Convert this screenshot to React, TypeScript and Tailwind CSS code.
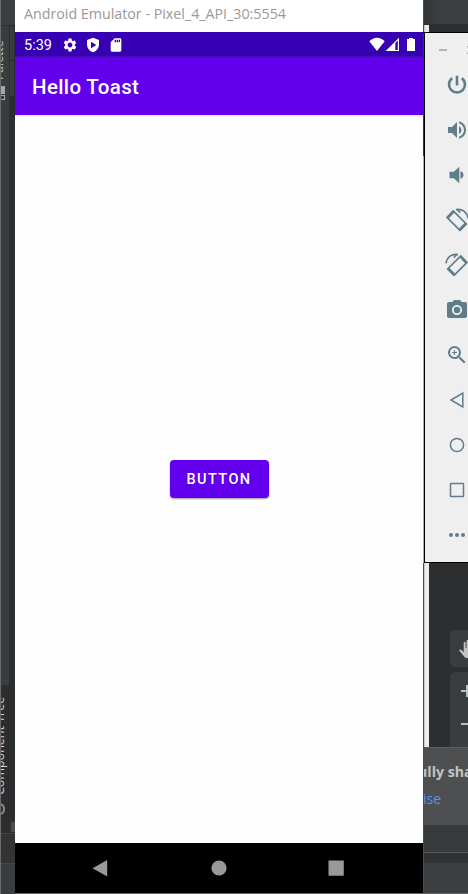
import React from "react";
import { MdSettings, MdSdCard, MdVolumeUp, MdCameraAlt, MdZoomIn } from "react-icons/md";

function Svg({ children, className = "h-6 w-6" }: { children: React.ReactNode; className?: string }) {
  return (
    <svg viewBox="0 0 24 24" className={`block shrink-0 ${className}`} fill="currentColor">
      {children}
    </svg>
  );
}

function Rotate({ flip = false }: { flip?: boolean }) {
  return (
    <Svg>
      <g transform={flip ? "translate(24 0) scale(-1 1)" : undefined} fill="none" stroke="currentColor">
        <path d="M8.2 2.9 2 9.4 15 22.4 21.4 16Z" strokeWidth="1.7" strokeLinejoin="round" />
        <path d="m8.8 3.5-6.2 6.5M14.4 21.8l6.4-6.4" strokeWidth="2.4" />
        <path d="M11 1.6c6.3-1.2 11 2.6 12 8.8M12.6 2l2.7 2.7" strokeWidth="1.6" />
      </g>
    </Svg>
  );
}

const tools: React.ReactNode[] = [
  <Svg><path d="M12 2.8v9.6M7.2 5.1a8 8 0 1 0 9.6 0" fill="none" stroke="currentColor" strokeWidth="2.6" /></Svg>,
  <MdVolumeUp size={24} />,
  <Svg><path d="M4.5 8.7v6.6h4.4l5.4 5V3.7l-5.4 5ZM15.5 8v8c1.9-.8 3-2.2 3-4s-1.1-3.2-3-4Z" /></Svg>,
  <Rotate />,
  <Rotate flip />,
  <MdCameraAlt size={24} />,
  <MdZoomIn size={24} />,
  <Svg><path d="M17.8 5v14L6 12Z" fill="none" stroke="currentColor" strokeWidth="1.5" /></Svg>,
  <Svg><circle cx="12" cy="12" r="6.6" fill="none" stroke="currentColor" strokeWidth="1.5" /></Svg>,
  <Svg><rect x="5.5" y="5.5" width="13" height="13" rx=".6" fill="none" stroke="currentColor" strokeWidth="1.5" /></Svg>,
  <Svg><circle cx="6" cy="12" r="2" /><circle cx="12" cy="12" r="2" /><circle cx="18" cy="12" r="2" /></Svg>,
];

function PaletteStrip() {
  return (
    <div className="relative flex w-[15px] shrink-0 flex-col overflow-hidden border-l border-[#6b6b6b] bg-[#2c2d2f]">
      <div className="h-[25px] shrink-0 bg-[#3c3f41]" />
      <div className="flex h-[660px] shrink-0 border-t border-[#292b2c]">
        <div className="w-2 bg-[#3a3d3f]" />
        <div className="ml-px h-[71px] w-1 border-b border-[#292b2c] bg-[#3a3d3f]">
          <div className="h-[35px] border-b border-[#292b2c]" />
        </div>
      </div>
      <div className="h-[148px] shrink-0" />
      <div className="h-[30px] shrink-0 border-t border-[#444648] bg-[#323335]" />
      <div className="grow border-t border-[#48494a] bg-[#3a3d3f]" />
      <div className="absolute -left-[9px] top-[40px] h-[40px] w-[14px] rotate-180 whitespace-nowrap font-['Open_Sans',sans-serif] text-[12.2px] leading-[14px] text-[#c4c4c4] [writing-mode:vertical-rl]">Palette</div>
      <div className="absolute left-0 top-[86px] h-[8px] w-[4px] bg-[#a5a5a5]" />
      <div className="absolute left-0 top-[95px] h-[5px] w-[4px] border border-l-0 border-[#a5a5a5]" />
      <div className="absolute -left-[9px] top-[698px] h-[97px] w-[15px] rotate-180 whitespace-nowrap font-['Open_Sans',sans-serif] text-[12.5px] leading-[15px] text-[#d8d4c8] [writing-mode:vertical-rl]">Component Tree</div>
      <div className="absolute -left-[7px] top-[803px] h-[12px] w-[11px] rounded-full border-2 border-[#888]" />
      <div className="absolute left-[10px] top-[822px] h-[10px] w-1 bg-[#4b4d4f]" />
    </div>
  );
}

function Phone() {
  return (
    <main className="flex w-[408px] shrink-0 flex-col bg-[#fefefe] font-[Roboto,sans-serif]">
      <header className="flex h-8 shrink-0 items-start bg-white pl-[9px] pt-[3px] font-['Open_Sans',sans-serif] text-[14.7px] leading-[20px] text-[#999]">
        <span className="inline-block origin-left scale-x-[0.97] whitespace-nowrap">Android Emulator - Pixel_4_API_30:5554</span>
      </header>
      <div className="flex h-[25px] shrink-0 items-center bg-[#3700b3] pl-[9px] pr-2 text-white">
        <span className="w-[38px] pt-[3px] text-[14.5px] leading-none">5:39</span>
        <MdSettings size={16} />
        <Svg className="ml-[7px] h-4 w-4">
          <path fillRule="evenodd" d="M12 1 3 4.5V11c0 5.6 3.8 10.8 9 12 5.2-1.2 9-6.4 9-12V4.5ZM9 7l8 5-8 5Z" />
        </Svg>
        <MdSdCard size={16} className="ml-[7px]" />
        <span className="grow" />
        <Svg className="h-4 w-4"><path d="M.5 6.5C7-.5 17-.5 23.5 6.5L12 21Z" /></Svg>
        <Svg className="h-4 w-4"><path fillRule="evenodd" d="M1 21 21 1v20ZM15.5 9v10.5h3.7V5.3Z" /></Svg>
        <svg viewBox="0 0 8 13" className="ml-[6px] h-[13px] w-2" fill="currentColor"><path d="M2 1V0h4v1h2v12H0V1Z" /></svg>
      </div>
      <div className="flex h-[58px] shrink-0 items-center bg-[#6200ee] pl-[17px] pt-[3px] text-[20.5px] font-medium leading-none tracking-[0.35px] text-white shadow-[0_1px_2px_#ddd]">Hello Toast</div>
      <div className="flex grow items-center justify-center">
        <button className="h-[38px] w-[99px] rounded bg-[#6200ee] pt-[3px] text-[14.5px] font-medium leading-none tracking-[1.4px] text-white shadow-[0_1px_2px_#999]">BUTTON</button>
      </div>
      <nav className="flex h-[51px] shrink-0 items-center border-b border-[#666] bg-black pl-[73px] text-[#999]">
        <Svg><path d="M19.2 4v16.5L4.5 12.3Z" /></Svg>
        <Svg className="ml-[95px] h-6 w-6"><circle cx="12" cy="12" r="7.6" /></Svg>
        <Svg className="ml-[93px] h-6 w-6"><rect x="4.5" y="4.5" width="15.3" height="15.3" rx=".7" /></Svg>
      </nav>
    </main>
  );
}

function IdePanel() {
  return (
    <aside className="flex w-[45px] shrink-0 flex-col border-l border-[#4b4d4e] bg-[#3c3f41]">
      <div className="h-[25px] shrink-0 border-b border-[#2c2e2f] bg-gradient-to-r from-[#333637] to-[#3c3f41] to-40%" />
      <div className="flex h-[722px] shrink-0">
        <div className="w-[5px] shrink-0 border-l border-[#c9c9c9] bg-[#ececec]" />
        <div className="flex grow flex-col overflow-hidden bg-[#2d2e30] pl-[21px] pt-[605px]">
          <div className="h-[37px] shrink-0 rounded-l-[5px] bg-[#393d3f] pl-[9px] pt-[9px] text-[#c2c2c2]">
            <svg viewBox="0 0 18 20" className="h-5 w-[18px]" fill="currentColor">
              <path d="M0 11.2c.8-1 2-.8 2.8 0L4.7 13V4c0-1.4 1.9-1.4 1.9 0v5h.9V2c0-1.5 2-1.5 2 0v7h.9V3c0-1.4 2-1.4 2 0v7h.9V6c0-1.4 1.9-1.4 1.9 0v8c0 3-1.8 5-4.5 5H8c-1.4 0-2.4-.6-3.1-1.8Z" />
            </svg>
          </div>
          <div className="mt-[5px] flex grow flex-col rounded-tl-[5px] bg-[#393d3f] pl-[11px] text-[#b5bdc1]">
            <svg viewBox="0 0 12 12" className="mt-[13px] h-3 w-3"><path d="M0 6h12M6 0v12" stroke="currentColor" strokeWidth="2" /></svg>
            <div className="mt-[26px] h-[2px] w-3 shrink-0 bg-current" />
          </div>
        </div>
      </div>
      <div className="flex h-[78px] shrink-0 flex-col overflow-hidden border-t border-[#5c5e60] bg-[#4d4f51] font-['Open_Sans',sans-serif] text-[14.2px] leading-[20px]">
        <div className="mt-[14px] h-[20px] whitespace-nowrap font-bold text-[#c3c3c3]"><span className="-ml-[6px]">ully sha</span></div>
        <div className="-ml-px mt-[7px] h-[20px] text-[#5993ed]">ise</div>
      </div>
      <div className="h-[27px] shrink-0 bg-[#383b3c]" />
      <div className="h-[11px] shrink-0 border-t border-[#555859] bg-[#303233]" />
      <div className="grow border-b border-[#666]" />
    </aside>
  );
}

export default function App() {
  return (
    <div className="relative flex h-[894px] w-[468px] overflow-hidden">
      <PaletteStrip />
      <Phone />
      <IdePanel />
      <section className="absolute left-[423px] top-8 flex h-[531px] w-[80px] flex-col border-y border-l-2 border-black bg-[#efefef] text-[#607d8b]">
        <div className="absolute -left-[2px] top-0 h-[123px] w-px bg-[#383838]" />
        <div className="absolute -left-[2px] top-[123px] h-[407px] w-px bg-[#adadad]" />
        <div className="flex h-[40px] shrink-0 pl-[14px] pt-[16px] text-[#aab7bd]">
          <span className="h-[2px] w-2 bg-current" />
          <svg viewBox="0 0 8 8" className="-mt-[3px] ml-5 h-2 w-2"><path d="m0 0 8 8M8 0 0 8" stroke="currentColor" strokeWidth="1.5" /></svg>
        </div>
        <div className="flex flex-col gap-[21px] pl-5">
          {tools.map((icon, index) => <div key={index} className="h-6 w-6">{icon}</div>)}
        </div>
      </section>
    </div>
  );
}
